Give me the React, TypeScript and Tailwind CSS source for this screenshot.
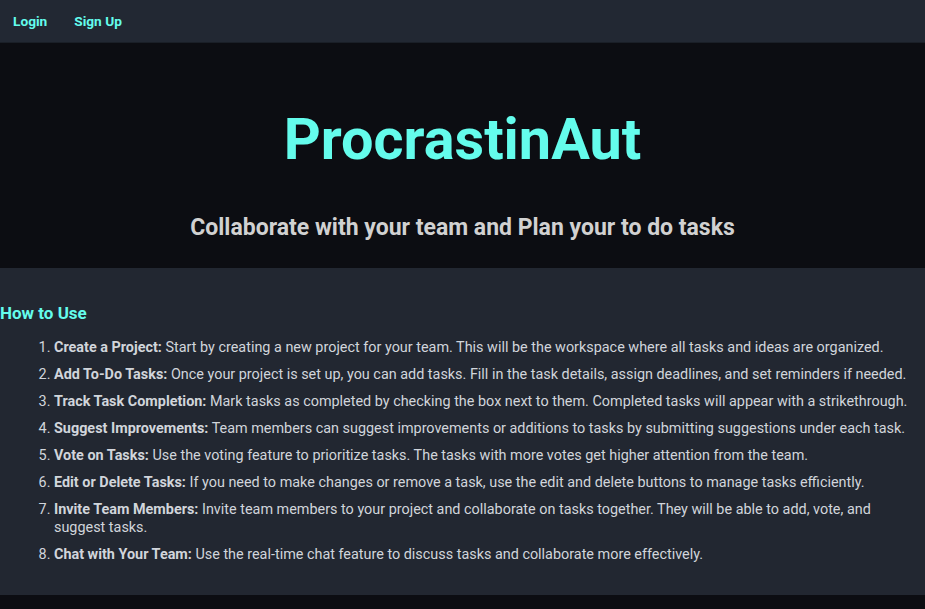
import React from 'react';

const steps = [
  { title: 'Create a Project:', text: 'Start by creating a new project for your team. This will be the workspace where all tasks and ideas are organized.' },
  { title: 'Add To-Do Tasks:', text: 'Once your project is set up, you can add tasks. Fill in the task details, assign deadlines, and set reminders if needed.' },
  { title: 'Track Task Completion:', text: 'Mark tasks as completed by checking the box next to them. Completed tasks will appear with a strikethrough.' },
  { title: 'Suggest Improvements:', text: 'Team members can suggest improvements or additions to tasks by submitting suggestions under each task.' },
  { title: 'Vote on Tasks:', text: 'Use the voting feature to prioritize tasks. The tasks with more votes get higher attention from the team.' },
  { title: 'Edit or Delete Tasks:', text: 'If you need to make changes or remove a task, use the edit and delete buttons to manage tasks efficiently.' },
  { title: 'Invite Team Members:', text: 'Invite team members to your project and collaborate on tasks together. They will be able to add, vote, and suggest tasks.' },
  { title: 'Chat with Your Team:', text: 'Use the real-time chat feature to discuss tasks and collaborate more effectively.' },
];

const App: React.FC = () => {
  return (
    <div className="min-h-screen bg-[#0c0d12] font-['Roboto',sans-serif]">
      <nav className="h-[43px] bg-[#222833] flex items-center gap-[27px] px-[13px] border-b border-[#1a1f27]">
        <a href="#" className="text-[13.7px] font-bold text-[#64fcec]">Login</a>
        <a href="#" className="text-[13.7px] font-bold text-[#64fcec]">Sign Up</a>
      </nav>

      <header className="h-[225px] bg-[#0c0d12] flex flex-col items-center">
        <h1 className="mt-[62px] text-[57.6px] leading-[70px] font-bold text-[#64fcec]">ProcrastinAut</h1>
        <p className="mt-[39px] text-[23px] leading-[28px] font-bold text-[#d1d1d1]">Collaborate with your team and Plan your to do tasks</p>
      </header>

      <section className="bg-[#222731] pt-[34px] pb-[22px]">
        <h2 className="text-[17px] leading-[22px] font-bold text-[#64fcec]">How to Use</h2>
        <ol className="mt-[15px] list-decimal pl-[54px] pr-4 text-[14.4px] leading-[18px] text-[#d1d5db]">
          {steps.map(step => (
            <li key={step.title} className="mb-[9px]">
              <strong className="font-bold">{step.title}</strong> {step.text}
            </li>
          ))}
        </ol>
      </section>
    </div>
  );
};

export default App;
